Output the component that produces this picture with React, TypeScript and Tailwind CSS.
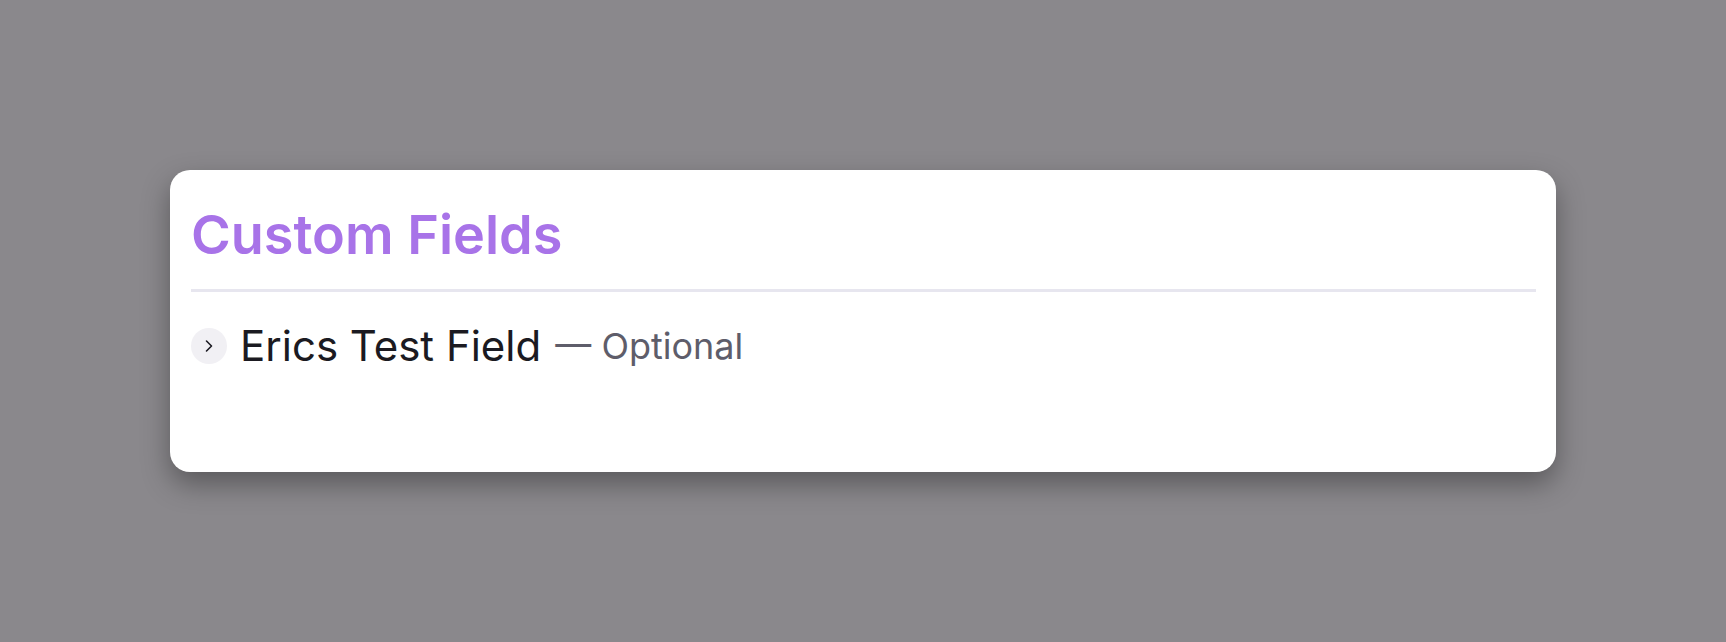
import React from "react";

export default function App() {
  return (
    <div className="w-[1726px] h-[642px] bg-[#8a888c] flex items-center justify-center" style={{ fontFamily: "Inter, 'Noto Sans', sans-serif" }}>
      <div className="w-[1386px] h-[302px] bg-white rounded-[20px] shadow-[0_12px_28px_rgba(0,0,0,0.35)] pl-[21px] pr-5 pt-[33px] flex flex-col">
        <h1 className="text-[54px] leading-[64px] font-semibold text-[#a873e8]">Custom Fields</h1>
        <div className="mt-[22px] h-[3px] bg-[#e7e6ef]" />
        <div className="mt-[33px] flex items-center">
          <div className="w-[36px] h-[36px] rounded-full bg-[#f1f0f4] flex items-center justify-center">
            <svg width="12" height="14" viewBox="0 0 12 14" fill="none">
              <path d="M3.5 2 L8.5 7 L3.5 12" stroke="#1c1b22" strokeWidth="1.6" strokeLinecap="round" strokeLinejoin="round" />
            </svg>
          </div>
          <span className="ml-[13px] text-[42px] leading-none text-[#1b1a21]">Erics Test Field</span>
          <span className="ml-[14px] text-[36px] leading-none text-[#5e5d6a]">— Optional</span>
        </div>
      </div>
    </div>
  );
}
